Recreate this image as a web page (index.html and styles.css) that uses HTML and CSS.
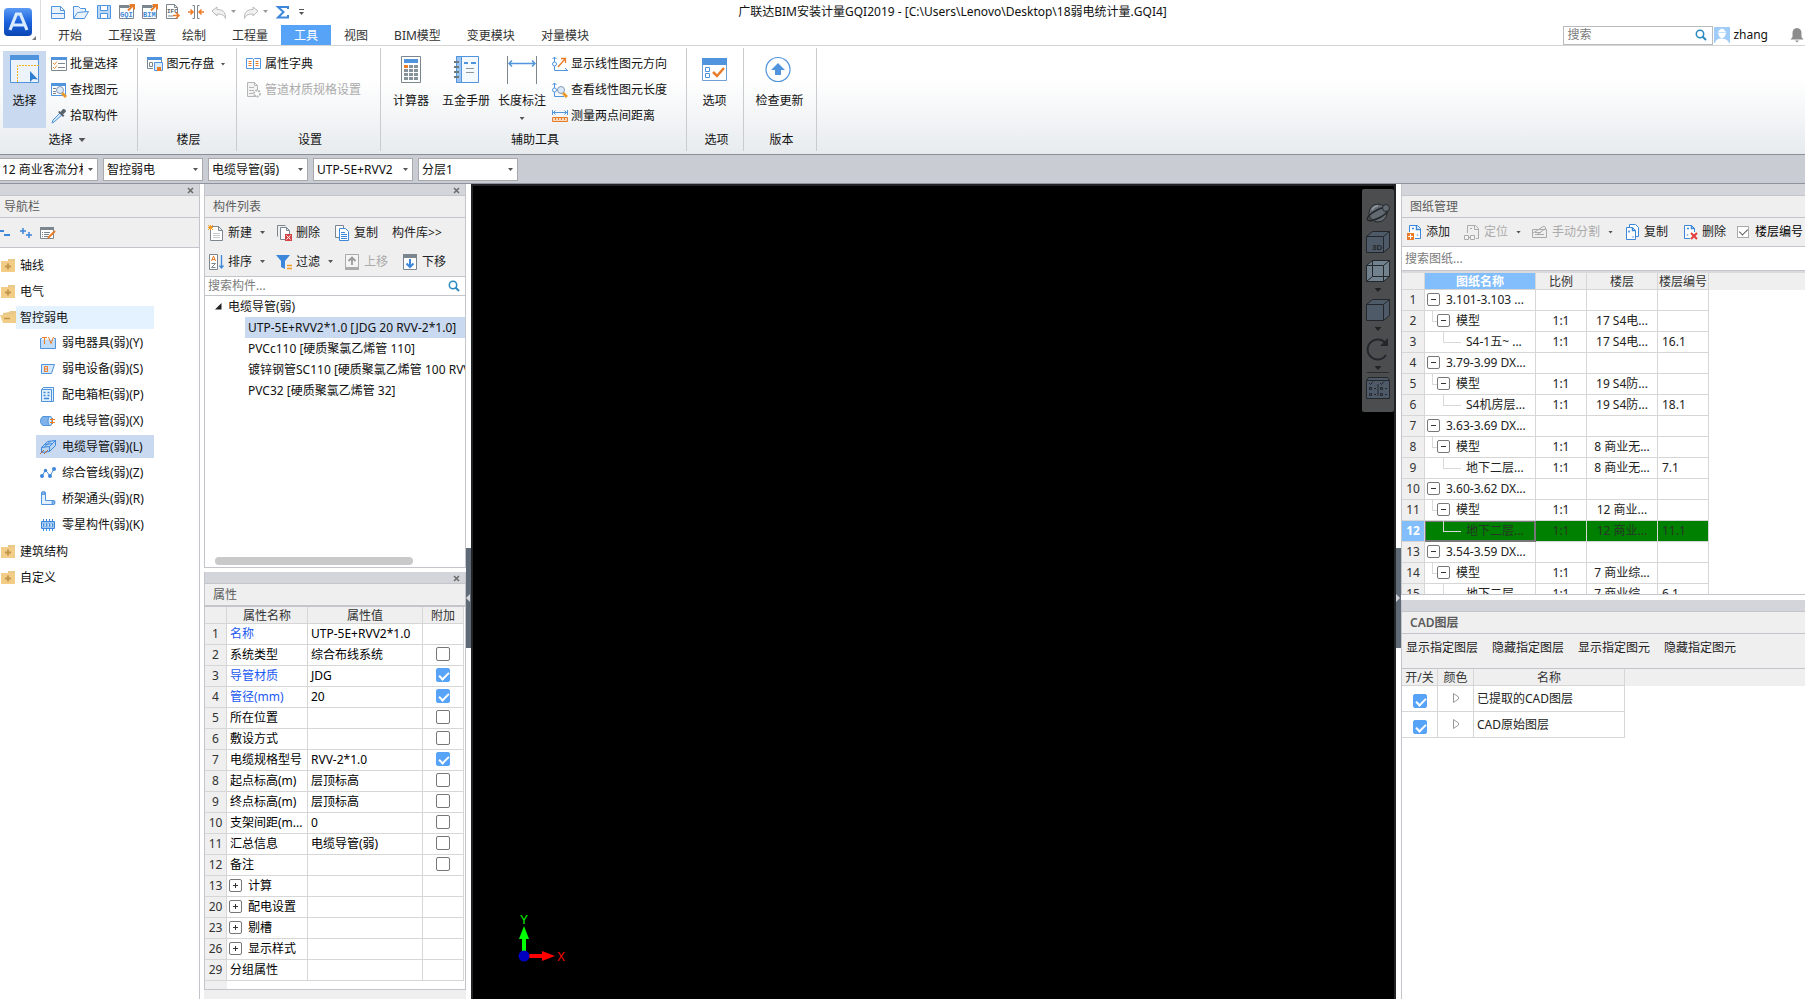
FILE: index.html
```html
<!DOCTYPE html>
<html lang="zh-CN">
<head>
<meta charset="utf-8">
<title>广联达BIM安装计量GQI2019</title>
<link rel="stylesheet" href="styles.css">
</head>
<body>
<svg class="defs" aria-hidden="true">
  <symbol id="folder" viewBox="0 0 16 16"><path d="M8 2h7v3H8z" fill="#e9c98a"/><path d="M1 4h14v11H1z" fill="#f1cd88"/><path d="M8 6.500v6M5 9.500h6" stroke="#c2964a" stroke-width="1.800"/></symbol>
  <symbol id="search" viewBox="0 0 12 12"><circle cx="5" cy="5" r="3.700" fill="none" stroke="#2a8ac0" stroke-width="1.500"/><path d="M7.500 7.500l3.500 3.500" stroke="#2a8ac0" stroke-width="2"/></symbol>
</svg>

<header class="titlebar">
  <button class="app-button" aria-label="应用菜单">
    <svg width="36" height="40" viewBox="0 0 36 40"><defs><linearGradient id="lg" x2="0" y2="1"><stop offset="0" stop-color="#5b9bf5"/><stop offset=".5" stop-color="#1b62dc"/><stop offset="1" stop-color="#0b46b4"/></linearGradient></defs><rect x="4" y="8" width="28" height="28" rx="4" fill="url(#lg)"/><path d="M10 30l6.400-16h4L27 30M13 25h11" fill="none" stroke="#d9ecff" stroke-width="3.200"/><path d="M36 36v4h-4z" fill="#777"/></svg>
  </button>
  <div class="title-main">
    <div class="title-row">
      <div class="quick">
        <button aria-label="新建"><svg width="16" height="16" viewBox="0 0 16 16" fill="none" stroke="#4f94dc"><path d="M1.500 2.500h9l4 4v8h-13zM10.500 2.500v4h4M1.500 9.500h13" fill="#eaf3fd"/></svg></button>
        <button aria-label="打开"><svg width="16" height="16" viewBox="0 0 16 16" fill="#eaf3fd" stroke="#4f94dc"><path d="M.5 14.500v-12h5l2 2h5v3M.5 14.500l4-6 11-1-4 7z"/></svg></button>
        <button aria-label="保存"><svg width="16" height="16" viewBox="0 0 16 16" fill="#b9d8f8" stroke="#4f94dc"><path d="M1.500 1.500h13v13h-13z"/><path d="M4.500 1.500h7v5h-7zM4.500 9.500h7v5h-7z" fill="#fff"/></svg></button>
        <button aria-label="导出GQI"><svg width="16" height="16" viewBox="0 0 16 16"><path d="M.5 2.500h14v12H.5z" fill="#fff" stroke="#7b868e"/><path d="M0 1h10v3H0z" fill="#7b868e"/><text x="1" y="13" font-family="Liberation Mono" font-size="7" font-weight="bold" fill="#3f88d8">GQI</text><path d="M9 6.500l5.500-5.500M10.500 1H15v4.500" fill="none" stroke="#e87c28" stroke-width="2"/></svg></button>
        <button aria-label="导出BIM"><svg width="16" height="16" viewBox="0 0 16 16"><path d="M.5 2.500h14v12H.5z" fill="#fff" stroke="#7b868e"/><path d="M0 1h10v3H0z" fill="#7b868e"/><text x="1" y="13" font-family="Liberation Mono" font-size="7" font-weight="bold" fill="#3f88d8">BIM</text><path d="M9 6.500l5.500-5.500M10.500 1H15v4.500" fill="none" stroke="#e87c28" stroke-width="2"/></svg></button>
        <button aria-label="导出IFC"><svg width="16" height="16" viewBox="0 0 16 16"><path d="M1.500.5h8l3 3v11h-11zM9.500.5v3h3" fill="#fff" stroke="#7b868e"/><text x="2" y="9" font-family="Liberation Mono" font-size="6" font-weight="bold" fill="#59636b">IFC</text><path d="M3 12h5" stroke="#7b868e"/><path d="M8 11.500h6M11 8.500l3 3-3 3" fill="none" stroke="#e87c28" stroke-width="1.500"/></svg></button>
        <button aria-label="合并"><svg width="16" height="16" viewBox="0 0 16 16"><path d="M4.500 1.500h2v13h-2M11.500 1.500h-2v13h2" fill="none" stroke="#7b868e"/><path d="M0 8h5M16 8h-5M2.500 5.500L5 8l-2.500 2.500M13.500 5.500L11 8l2.500 2.500" fill="none" stroke="#f07a28" stroke-width="1.500"/></svg></button>
        <button class="with-caret off" aria-label="撤销"><svg width="16" height="16" viewBox="0 0 16 16"><path d="M1 7l5-4v2.500c5 0 9 2 8.500 9-1-3-3.500-4.500-8.500-4.500v2z" fill="#f1f1f1" stroke="#b9b9b9"/></svg><i class="caret"></i></button>
        <button class="with-caret off" aria-label="重做"><svg width="16" height="16" viewBox="0 0 16 16"><path d="M15 7l-5-4v2.500c-5 0-9 2-8.500 9 1-3 3.500-4.500 8.500-4.500v2z" fill="#f1f1f1" stroke="#b9b9b9"/></svg><i class="caret"></i></button>
        <button aria-label="汇总"><svg width="16" height="16" viewBox="0 0 16 16"><path d="M13 5V3H3l5.500 5L3 13.500h10V11" fill="none" stroke="#3d87da" stroke-width="2"/></svg></button>
        <button aria-label="自定义快速访问栏"><svg width="7" height="8" viewBox="0 0 7 8"><path d="M1 1.500h5" stroke="#555"/><path d="M1 4h5L3.500 7z" fill="#555"/></svg></button>
      </div>
      <h1 class="title">广联达BIM安装计量GQI2019 - [C:\Users\Lenovo\Desktop\18弱电统计量.GQI4]</h1>
    </div>
    <div class="tab-row">
      <nav class="tabs">
        <button>开始</button><button>工程设置</button><button>绘制</button><button>工程量</button><button class="active">工具</button><button>视图</button><button>BIM模型</button><button>变更模块</button><button>对量模块</button>
      </nav>
      <div class="account">
        <div class="top-search"><input type="text" placeholder="搜索" aria-label="搜索"><svg width="12" height="12"><use href="#search"/></svg></div>
        <button class="user"><svg width="16" height="16" viewBox="0 0 16 16"><path d="M0 0h16v16H0z" fill="#9fccf9"/><path d="M4 5q4-7 8 0v1q-1 5-4 5T4 6zM1 16q1-5 7-4.500T15 16z" fill="#fff"/><path d="M3.500 5.500h9" stroke="#c5e0fb"/></svg>zhang</button>
        <button class="bell" aria-label="通知"><svg width="14" height="16" viewBox="0 0 14 16"><path d="M7 1q4.500.5 4.500 5v4l2 2.500H.5l2-2.500V6Q2.500 1.500 7 1zM5 13.500h4L7 15.500z" fill="#8c8c8c"/></svg></button>
      </div>
    </div>
  </div>
</header>

<section class="ribbon" aria-label="工具">
  <div class="group g-select">
    <div class="tools">
      <button class="big on"><svg width="30" height="30" viewBox="0 0 30 30"><path d="M.5 1.500h28v27H.5z" fill="#edf3fb" stroke="#4f94dc"/><path d="M0 1h29v5H0z" fill="#4f94dc"/><path d="M7.500 28V11.500H29" fill="none" stroke="#f2b01e" stroke-dasharray="2 1"/><path d="M20 17v11l3-3 5 .5z" fill="#2f7ed0"/></svg><span>选择</span></button>
      <div class="stack">
        <button><svg width="16" height="16" viewBox="0 0 16 16"><path d="M.5 1.500h15v13H.5z" fill="#fff" stroke="#7b868e"/><path d="M0 1h16v3H0z" fill="#4f94dc"/><path d="M7 7.500h7M7 11.500h7" stroke="#7b868e"/><path d="M2 7l1.500 1.500L6 5.500M2 11l1.500 1.500L6 9.500" fill="none" stroke="#e8892c"/></svg>批量选择</button>
        <button><svg width="16" height="16" viewBox="0 0 16 16"><path d="M.5 1.500h14v12H.5z" fill="#fff" stroke="#4f94dc"/><path d="M0 1h15v3H0z" fill="#4f94dc"/><path d="M2 6.500h3M2 9.500h3M2 11.500h3" stroke="#7b868e"/><circle cx="9" cy="8" r="3.500" fill="#dbe9f8" stroke="#8299b8"/><path d="M11 11l4 4" stroke="#e99a2b" stroke-width="3"/></svg>查找图元</button>
        <button><svg width="16" height="16" viewBox="0 0 16 16"><path d="M9 5l2 2-8 7-2 1 1-3z" fill="#d4e7f9" stroke="#4f94dc"/><path d="M7 4l5 5 1.500-1.500L12 6.500l3-3q0-3-3-2.500L9.500 4 8.500 3z" fill="#59636b"/></svg>拾取构件</button>
      </div>
    </div>
    <div class="caption">选择<i class="caret wide"></i></div>
  </div>
  <div class="group g-floor">
    <div class="tools"><div class="stack">
      <button><svg width="16" height="16" viewBox="0 0 16 16"><path d="M.5 12.500v-11h14v5M.5 12.500H6" fill="none" stroke="#7b868e"/><path d="M0 1h15v3H0z" fill="#4f94dc"/><path d="M2.500 6.500h3v4h-3z" fill="#fff" stroke="#7b868e"/><path d="M7.500 6.500h8v8h-8z" fill="#d9eafb" stroke="#4f94dc"/><path d="M10 11h4v4h-4z" fill="#e87c28"/></svg>图元存盘<i class="caret"></i></button>
    </div></div>
    <div class="caption">楼层</div>
  </div>
  <div class="group g-setting">
    <div class="tools"><div class="stack">
      <button><svg width="16" height="16" viewBox="0 0 16 16"><path d="M.5 2.500h6l1 1 1-1h6v10h-6l-1 1-1-1h-6zM7.500 3.500v10" fill="#fff" stroke="#4f94dc"/><path d="M2.500 5.500h3M2.500 7.500h3M2.500 9.500h3M9.500 5.500h3M9.500 7.500h3M9.500 9.500h3" stroke="#e87c28"/></svg>属性字典</button>
      <button disabled><svg width="16" height="16" viewBox="0 0 16 16"><path d="M1.500.5h7l3 3v11h-10zM8.500.5v3h3M3 5.500h5M3 8.500h5M3 11.500h4" fill="#f3f3f3" stroke="#b5b5b5"/><circle cx="11" cy="11.500" r="3" fill="#fff" stroke="#bbb" stroke-width="2" stroke-dasharray="2 1"/></svg>管道材质规格设置</button>
    </div></div>
    <div class="caption">设置</div>
  </div>
  <div class="group g-assist">
    <div class="tools">
      <button class="big"><svg width="30" height="30" viewBox="0 0 30 30"><path d="M5.500 2.500h19v26h-19z" fill="#fff" stroke="#7b868e"/><path d="M8 5h14v4H8z" fill="#4f94dc"/><path d="M8 11h4v3H8z" fill="#e87c28"/><path d="M13 11h4v3h-4zM18 11h4v3h-4zM8 15h4v3H8zM13 15h4v3h-4zM18 15h4v3h-4zM8 19h4v3H8zM13 19h4v3h-4zM18 19h4v3h-4zM8 23h4v3H8zM13 23h4v3h-4zM18 23h4v3h-4z" fill="#87939b"/></svg><span>计算器</span></button>
      <button class="big"><svg width="30" height="30" viewBox="0 0 30 30"><path d="M5.500 2.500h22v26h-22z" fill="#f4f9fe" stroke="#4f94dc"/><path d="M5.500 2.500h5v26h-5z" fill="#9cc4ee" stroke="#4f94dc"/><path d="M3 8h5M3 13h5M3 18h5M3 23h5" stroke="#6c7880" stroke-width="2"/><path d="M13 9h4M20 9h5" stroke="#4f94dc" stroke-width="2"/><path d="M15 14.500h8M15 18.500h8" stroke="#8b969d"/></svg><span>五金手册</span></button>
      <button class="big"><svg width="30" height="30" viewBox="0 0 30 30"><path d="M.5 2v28M29.500 2v28" stroke="#7b868e"/><path d="M2 9.500h26M5 6.500l-3 3 3 3M25 6.500l3 3-3 3" fill="none" stroke="#4f94dc" stroke-width="1.500"/></svg><span>长度标注</span><i class="caret"></i></button>
      <div class="stack">
        <button><svg width="16" height="16" viewBox="0 0 16 16" fill="none"><path d="M2.500 1v13.500H16M.5 3l2-2 2 2M13 12l2.500 2.500" stroke="#4f94dc"/><circle cx="2.500" cy="8" r="2" fill="#fff" stroke="#4f94dc"/><path d="M6 11l7-8M9 2.500h4.500V7" stroke="#e87c28" stroke-width="1.300"/></svg>显示线性图元方向</button>
        <button><svg width="16" height="16" viewBox="0 0 16 16" fill="none"><path d="M2.500 1v13.500H12M.5 3l2-2 2 2" stroke="#4f94dc"/><circle cx="2.500" cy="8" r="2" fill="#fff" stroke="#4f94dc"/><circle cx="9" cy="8" r="3.500" fill="#dbe9f8" stroke="#8299b8"/><path d="M11 11l4 4" stroke="#e99a2b" stroke-width="3"/></svg>查看线性图元长度</button>
        <button><svg width="16" height="16" viewBox="0 0 16 16" fill="none"><path d="M.5 2v5M15.500 2v5M1 4.500h14M3.500 2.500l-2 2 2 2M12.500 2.500l2 2-2 2" stroke="#4f94dc"/><path d="M.5 9.500h15v4H.5z" fill="#fbd9bd" stroke="#e87c28"/><path d="M3.500 10v2M6.500 10v2M9.500 10v2M12.500 10v2" stroke="#e87c28"/></svg>测量两点间距离</button>
      </div>
    </div>
    <div class="caption">辅助工具</div>
  </div>
  <div class="group g-option">
    <div class="tools"><button class="big"><svg width="30" height="30" viewBox="0 0 30 30"><path d="M2.500 4.500h24v22h-24z" fill="#fff" stroke="#6f9fd4"/><path d="M2 4h25v7H2z" fill="#4f94dc"/><path d="M5.500 13.500h4v4h-4zM5.500 19.500h4v4h-4z" fill="#fff" stroke="#4f94dc"/><path d="M13 18l4 4 7-8" fill="none" stroke="#e87c28" stroke-width="2.500"/></svg><span>选项</span></button></div>
    <div class="caption">选项</div>
  </div>
  <div class="group g-version">
    <div class="tools"><button class="big"><svg width="30" height="30" viewBox="0 0 30 30"><circle cx="14" cy="15.500" r="12" fill="#fff" stroke="#4f94dc" stroke-width="1.200"/><path d="M14 9l7 7h-4v5h-6v-5H7z" fill="#4f94dc"/></svg><span>检查更新</span></button></div>
    <div class="caption">版本</div>
  </div>
</section>

<div class="filters">
  <span class="combo"><select aria-label="楼层"><option>12 商业客流分析</option></select></span>
  <span class="combo"><select aria-label="专业"><option>智控弱电</option></select></span>
  <span class="combo"><select aria-label="构件类型"><option>电缆导管(弱)</option></select></span>
  <span class="combo"><select aria-label="构件"><option>UTP-5E+RVV2</option></select></span>
  <span class="combo"><select aria-label="分层"><option>分层1</option></select></span>
</div>

<main class="workspace">
  <aside class="nav-panel">
    <div class="strip"><button aria-label="关闭导航栏"><svg width="7" height="7" viewBox="0 0 7 7"><path d="M1 1l5 5M6 1L1 6" stroke="#6b6b6b" stroke-width="1.500"/></svg></button></div>
    <h2>导航栏</h2>
    <div class="nav-tools">
      <button aria-label="全部折叠"><svg width="11" height="14" viewBox="0 0 11 14"><path d="M0 5h4M4 9h6" stroke="#3d87da" stroke-width="2"/></svg></button>
      <button aria-label="全部展开"><svg width="12" height="14" viewBox="0 0 12 14"><path d="M0 5h6M3 2v6M6 9h6M9 6v6" stroke="#3d87da" stroke-width="1.500"/></svg></button>
      <button aria-label="编辑"><svg width="16" height="14" viewBox="0 0 16 14"><path d="M.5 1.500h13v11H.5z" fill="#fff" stroke="#7b868e"/><path d="M0 1h14v3H0z" fill="#7b868e"/><path d="M2 6.500h1M4 6.500h6M2 8.500h1M4 8.500h5M2 10.500h1M4 10.500h4" stroke="#7b868e"/><path d="M8 12l7-7" stroke="#e87c28" stroke-width="2"/></svg></button>
    </div>
    <ul class="nav-tree">
      <li><svg width="16" height="16"><use href="#folder"/></svg><span>轴线</span></li>
      <li><svg width="16" height="16"><use href="#folder"/></svg><span>电气</span></li>
      <li class="open"><svg width="16" height="16" viewBox="0 0 16 16"><path d="M3 4l6-1 1-1h6v12H3z" fill="#e9c98a"/><path d="M0 6h13l3-2-1 10H3z" fill="#f1cd88"/><path d="M4 9.500h6" stroke="#c2964a" stroke-width="1.500"/></svg><span>智控弱电</span></li>
      <li class="leaf"><svg width="16" height="16" viewBox="0 0 16 16"><path d="M.5 4.500h15v9H.5z" fill="#c3dcf7"/><path d="M2 3.500H.5v10h15v-10H14" fill="none" stroke="#4f94dc"/><path d="M2 2.500h5M4.500 2v7M8.500 2l2.500 6.500L13.500 2" fill="none" stroke="#e87c28"/></svg><span>弱电器具(弱)(Y)</span></li>
      <li class="leaf"><svg width="16" height="16" viewBox="0 0 16 16"><path d="M1.500 3.500h13l-3 9h-10z" fill="#d4e7fb" stroke="#4f94dc"/><path d="M4.500 11V5.500h3v5h-3M4.500 8h3" fill="none" stroke="#e87c28"/></svg><span>弱电设备(弱)(S)</span></li>
      <li class="leaf"><svg width="16" height="16" viewBox="0 0 16 16"><path d="M1.500 2.500l2-2h10v14h-12zM1.500 2.500h10v12" fill="#e1effc" stroke="#4f94dc"/><path d="M3.500 5.500h2M7.500 5.500h2M3.500 8.500h2M7.500 8.500h2M4 11.500h5" stroke="#3d87da" stroke-width="1.500"/></svg><span>配电箱柜(弱)(P)</span></li>
      <li class="leaf"><svg width="16" height="16" viewBox="0 0 16 16"><path d="M3 3.500h8v9H3q-2.500-1-2.500-4.500T3 3.500z" fill="#7fb2ea" stroke="#4f94dc"/><ellipse cx="10" cy="8" rx="2" ry="4.500" fill="#d4e7fb" stroke="#4f94dc"/><path d="M10 6.500h5M10 9.500h5M12.500 5v6" stroke="#e87c28"/></svg><span>电线导管(弱)(X)</span></li>
      <li class="leaf current"><svg width="16" height="16" viewBox="0 0 16 16"><path d="M1.500 8.500l6-6 8-1v5l-6 6-8 1z" fill="#b9d6f5" stroke="#3d87da"/><path d="M1.500 8.500l8-1 6-6M9.500 7.500v5M4.500 8l6-6M5 5.500l8-1" fill="none" stroke="#3d87da"/><path d="M0 15l4-4M4 15l4-4" stroke="#b9683a"/></svg><span>电缆导管(弱)(L)</span></li>
      <li class="leaf"><svg width="16" height="16" viewBox="0 0 16 16"><path d="M2 11l3.500-6L10 11l4-7" fill="none" stroke="#4f94dc"/><g fill="#3d87da"><circle cx="2" cy="11" r="2"/><circle cx="5.500" cy="5.500" r="1.700"/><circle cx="10" cy="11" r="2"/><circle cx="14" cy="4" r="2"/></g></svg><span>综合管线(弱)(Z)</span></li>
      <li class="leaf"><svg width="16" height="16" viewBox="0 0 16 16"><path d="M1.500 2v11.500H14v-4H5.500V2z" fill="#e1effc" stroke="#4f94dc"/><ellipse cx="3.500" cy="2" rx="2" ry="1.500" fill="#7fb2ea" stroke="#4f94dc"/><ellipse cx="13.500" cy="11.500" rx="1.500" ry="2" fill="#7fb2ea" stroke="#4f94dc"/></svg><span>桥架通头(弱)(R)</span></li>
      <li class="leaf"><svg width="16" height="16" viewBox="0 0 16 16"><path d="M1.500 4.500h13v7h-13z" fill="#9cc4ee" stroke="#3d87da"/><path d="M3.500 2v12M6.500 2v12M9.500 2v12M12.500 2v12" stroke="#3d87da" stroke-dasharray="3 1.500"/><path d="M2 8h12" stroke="#fff" stroke-dasharray="1 2"/></svg><span>零星构件(弱)(K)</span></li>
      <li><svg width="16" height="16"><use href="#folder"/></svg><span>建筑结构</span></li>
      <li><svg width="16" height="16"><use href="#folder"/></svg><span>自定义</span></li>
    </ul>
  </aside>

  <div class="mid-column">
    <section class="panel components">
      <div class="strip"><button aria-label="关闭构件列表"><svg width="7" height="7" viewBox="0 0 7 7"><path d="M1 1l5 5M6 1L1 6" stroke="#6b6b6b" stroke-width="1.500"/></svg></button></div>
      <h2>构件列表</h2>
      <div class="toolbars">
        <div class="toolbar">
          <button class="drop"><svg width="16" height="16" viewBox="0 0 16 16"><path d="M2.500 1.500h8l4 4v10h-12zM10.500 1.500v4h4" fill="#fff" stroke="#7b868e"/><path d="M5 8.500h7M5 10.500h7M5 12.500h7" stroke="#c5cacd"/><path d="M0 0l5 5M5 0L0 5M2.500 0v5M0 2.500h5" stroke="#f29a22"/></svg>新建<i class="caret"></i></button>
          <button><svg width="16" height="16" viewBox="0 0 16 16"><path d="M1.500 11.500v-11h8" fill="none" stroke="#7b868e"/><path d="M4.500 2.500h6l3 3v9h-9zM10.500 2.500v3h3" fill="#fff" stroke="#7b868e"/><path d="M9 9h7v7H9z" fill="#d64545"/><path d="M10.500 10.500l4 4M14.500 10.500l-4 4" stroke="#fff"/></svg>删除</button>
          <button><svg width="16" height="16" viewBox="0 0 16 16"><path d="M5 12.500H1.500V.5h8V3" fill="#fff" stroke="#7b868e"/><path d="M5.500 3.500h6l3 3v9h-9z" fill="#fff" stroke="#3d87da"/><path d="M7 7.500h4M7 9.500h6M7 11.500h6M7 13.500h6" stroke="#3d87da"/></svg>复制</button>
          <button>构件库&gt;&gt;</button>
        </div>
        <div class="toolbar">
          <button class="drop"><svg width="16" height="16" viewBox="0 0 16 16"><path d="M1.500.5h8v15h-8z" fill="#fff" stroke="#7b868e"/><path d="M3.500 7l2-5 2 5M4 5.500h3" fill="none" stroke="#e87c28"/><path d="M3.500 9.500h4l-4 4h4" fill="none" stroke="#7b868e"/><path d="M13.500 1v13M11.500 11.500l2 2.500 2-2.500" fill="none" stroke="#3d87da" stroke-width="1.300"/></svg>排序<i class="caret"></i></button>
          <button class="drop"><svg width="16" height="16" viewBox="0 0 16 16"><path d="M0 1h14L9 7v8l-4-2V7z" fill="#3d87da"/><path d="M11 11.500h5M11 14.500h5" stroke="#f29a22" stroke-width="1.500"/></svg>过滤<i class="caret"></i></button>
          <button disabled><svg width="16" height="16" viewBox="0 0 16 16"><path d="M1.500.5h13v14h-13z" fill="#f4f4f4" stroke="#aaa"/><path d="M1 13h14v3H1z" fill="#aaa"/><path d="M8 11V4M4.500 7L8 3.500 11.500 7" fill="none" stroke="#999" stroke-width="1.800"/></svg>上移</button>
          <button><svg width="16" height="16" viewBox="0 0 16 16"><path d="M1.500.5h13v15h-13z" fill="#fff" stroke="#7b868e"/><path d="M1 0h14v4H1z" fill="#7b868e"/><path d="M8 5v8M4.500 9.500L8 13l3.500-3.500" fill="none" stroke="#3d87da" stroke-width="2"/></svg>下移</button>
        </div>
      </div>
      <div class="search"><input type="text" placeholder="搜索构件..." aria-label="搜索构件"><svg width="12" height="12"><use href="#search"/></svg></div>
      <ul class="comp-tree">
        <li class="root"><svg width="7" height="7" viewBox="0 0 7 7"><path d="M6.500 0v6.500H0z" fill="#222"/></svg>电缆导管(弱)</li>
        <li class="current">UTP-5E+RVV2*1.0 [JDG 20 RVV-2*1.0]</li>
        <li>PVCc110 [硬质聚氯乙烯管 110]</li>
        <li>镀锌钢管SC110 [硬质聚氯乙烯管 100 RVV</li>
        <li>PVC32 [硬质聚氯乙烯管 32]</li>
      </ul>
      <div class="hscroll"><i></i></div>
    </section>

    <section class="panel properties">
      <div class="strip"><button aria-label="关闭属性"><svg width="7" height="7" viewBox="0 0 7 7"><path d="M1 1l5 5M6 1L1 6" stroke="#6b6b6b" stroke-width="1.500"/></svg></button></div>
      <h2>属性</h2>
      <div class="prop-body">
        <table class="grid props">
          <colgroup><col class="w22"><col class="w81"><col class="w115"><col class="w41"></colgroup>
          <thead><tr><th></th><th>属性名称</th><th>属性值</th><th>附加</th></tr></thead>
          <tbody>
            <tr><th>1</th><td class="blue">名称</td><td>UTP-5E+RVV2*1.0</td><td></td></tr>
            <tr><th>2</th><td>系统类型</td><td>综合布线系统</td><td><input type="checkbox" aria-label="附加系统类型"></td></tr>
            <tr><th>3</th><td class="blue">导管材质</td><td>JDG</td><td><input type="checkbox" checked aria-label="附加导管材质"></td></tr>
            <tr><th>4</th><td class="blue">管径(mm)</td><td>20</td><td><input type="checkbox" checked aria-label="附加管径"></td></tr>
            <tr><th>5</th><td>所在位置</td><td></td><td><input type="checkbox" aria-label="附加所在位置"></td></tr>
            <tr><th>6</th><td>敷设方式</td><td></td><td><input type="checkbox" aria-label="附加敷设方式"></td></tr>
            <tr><th>7</th><td>电缆规格型号</td><td>RVV-2*1.0</td><td><input type="checkbox" checked aria-label="附加电缆规格型号"></td></tr>
            <tr><th>8</th><td>起点标高(m)</td><td>层顶标高</td><td><input type="checkbox" aria-label="附加起点标高"></td></tr>
            <tr><th>9</th><td>终点标高(m)</td><td>层顶标高</td><td><input type="checkbox" aria-label="附加终点标高"></td></tr>
            <tr><th>10</th><td>支架间距(m...</td><td>0</td><td><input type="checkbox" aria-label="附加支架间距"></td></tr>
            <tr><th>11</th><td>汇总信息</td><td>电缆导管(弱)</td><td><input type="checkbox" aria-label="附加汇总信息"></td></tr>
            <tr><th>12</th><td>备注</td><td></td><td><input type="checkbox" aria-label="附加备注"></td></tr>
            <tr><th>13</th><td><div class="node"><button class="box plus" aria-label="展开计算"></button>计算</div></td><td></td><td></td></tr>
            <tr><th>20</th><td><div class="node"><button class="box plus" aria-label="展开配电设置"></button>配电设置</div></td><td></td><td></td></tr>
            <tr><th>23</th><td><div class="node"><button class="box plus" aria-label="展开剔槽"></button>剔槽</div></td><td></td><td></td></tr>
            <tr><th>26</th><td><div class="node"><button class="box plus" aria-label="展开显示样式"></button>显示样式</div></td><td></td><td></td></tr>
            <tr><th>29</th><td>分组属性</td><td></td><td></td></tr>
          </tbody>
        </table>
      </div>
    </section>
  </div>

  <div class="splitter"><button class="left" aria-label="折叠左侧"></button></div>

  <section class="canvas" aria-label="绘图区">
    <div class="view-tools">
      <button aria-label="动态观察"><svg width="24" height="24" viewBox="0 0 24 24"><circle cx="12" cy="12" r="9" fill="#626970" stroke="#25292d"/><path d="M6 9q2-4 6-4" fill="none" stroke="#8b9298" stroke-width="2"/><ellipse cx="12" cy="13" rx="12" ry="4" transform="rotate(-28 12 13)" fill="none" stroke="#23272b" stroke-width="1.500"/><circle cx="20" cy="7" r="3.500" fill="#626970" stroke="#25292d"/></svg></button>
      <button aria-label="三维"><svg width="24" height="24" viewBox="0 0 24 24"><path d="M.5 6.500l6-5h17v16l-6 5H.5z" fill="#4e5a67" stroke="#23272b"/><path d="M.5 6.500h17v16M17.500 6.500l6-5" fill="none" stroke="#23272b"/><text x="6" y="20" font-family="Liberation Sans" font-size="8" font-weight="bold" fill="#23272b">3D</text></svg></button>
      <button class="with-menu" aria-label="线框"><svg width="24" height="24" viewBox="0 0 24 24"><path d="M.5 6.500l6-5h17v16l-6 5H.5z" fill="#71818e" stroke="#23272b"/><path d="M.5 6.500h17v16M17.500 6.500l6-5M6.500 1.500v16h17M6.500 17.500l-6 5" fill="none" stroke="#23272b"/></svg><i class="caret"></i></button>
      <button class="with-menu" aria-label="视图方向"><svg width="24" height="24" viewBox="0 0 24 24"><path d="M.5 6.500l6-5h17v16l-6 5H.5z" fill="#4e5a67" stroke="#23272b"/><path d="M.5 6.500h17v16M17.500 6.500l6-5" fill="none" stroke="#23272b"/></svg><i class="caret"></i></button>
      <button class="with-menu" aria-label="旋转"><svg width="24" height="24" viewBox="0 0 24 24"><path d="M20 18a10 10 0 1 1 0-11" fill="none" stroke="#23272b" stroke-width="2"/><path d="M22 1v8h-8z" fill="#23272b"/></svg><i class="caret"></i></button>
      <hr>
      <button aria-label="显示设置"><svg width="24" height="24" viewBox="0 0 24 24"><path d="M.5 4.500l2-3h19l2 3v18H.5zM.5 4.500h23M12 8v12" fill="#4e5a67" stroke="#23272b"/><path d="M3 7l1.500 1.500L7 5.500M14 7l1.500 1.500L18 5.500M3.500 11.500h2v2h-2zM3.500 17.500h2v2h-2zM14.500 11.500h2v2h-2zM14.500 17.500h2v2h-2zM8 12.500h2M8 18.500h2M19 12.500h2M19 18.500h2" fill="none" stroke="#23272b"/></svg></button>
    </div>
    <svg class="axis" width="56" height="60" viewBox="0 0 56 60">
      <path d="M13 46V26" stroke="#0f0" stroke-width="4"/><path d="M13 16l5 13H8z" fill="#0f0"/>
      <path d="M16 46h18" stroke="#f00" stroke-width="4"/><path d="M44 46l-13-5v10z" fill="#f00"/>
      <circle cx="13" cy="46" r="5.500" fill="#0000c0"/>
      <text x="9" y="14" font-size="12" fill="#0f0">Y</text><text x="46" y="51" font-size="12" fill="#f00">X</text>
    </svg>
  </section>

  <div class="splitter"><button class="right" aria-label="折叠右侧"></button></div>

  <div class="right-column">
    <section class="drawings">
      <div class="strip"></div>
      <h2>图纸管理</h2>
      <div class="toolbar">
        <button><svg width="16" height="16" viewBox="0 0 16 16"><path d="M3.500 8V1.500h8l3 3v10H9" fill="#fff" stroke="#3d87da"/><path d="M10.500 1.500v4h4M6 4.500h2M11.500 10.500v1" fill="none" stroke="#3d87da" stroke-width="1.500"/><path d="M1 9h7v7H1z" fill="#e87c28"/><path d="M4.500 10v5M2 12.500h5" stroke="#fff"/></svg>添加</button>
        <button class="drop" disabled><svg width="16" height="16" viewBox="0 0 16 16"><path d="M3.500 9V1.500h8l3 3v10H12M10.500 1.500v4h4M6 4.500h2" fill="none" stroke="#aaa"/><path d="M.5 11.500h4v4h-4zM6.500 11.500h4v4h-4zM4.500 13.500h2" fill="#f4f4f4" stroke="#aaa"/></svg>定位<i class="caret"></i></button>
        <button class="drop" disabled><svg width="16" height="16" viewBox="0 0 16 16"><path d="M.5 5.500h14v8H.5zM3 8.500h6M3 10.500h9M1 9l11-7 2 2-8 6" fill="none" stroke="#aaa"/></svg>手动分割<i class="caret"></i></button>
        <button><svg width="16" height="16" viewBox="0 0 16 16"><path d="M5.500 3V.5h6l3 3v9H12" fill="#fff" stroke="#3d87da"/><path d="M2.500 3.500h6l3 3v9h-9z" fill="#fff" stroke="#3d87da"/><path d="M8.500 3.500v3h3M5 6.500v2M9 12.500v1" fill="none" stroke="#3d87da" stroke-width="1.500"/></svg>复制</button>
        <button><svg width="16" height="16" viewBox="0 0 16 16"><path d="M8 14.500H2.500v-13h7l3 3V8" fill="#fff" stroke="#3d87da"/><path d="M9.500 1.500v3h3M5 4.500h2M5.500 10.500v1" fill="none" stroke="#3d87da" stroke-width="1.500"/><path d="M9 9l6 6M15 9l-6 6" stroke="#e23b3b" stroke-width="2"/></svg>删除</button>
        <label class="floor-check"><input type="checkbox" checked>楼层编号</label>
      </div>
      <div class="search"><input type="text" placeholder="搜索图纸..." aria-label="搜索图纸"></div>
      <div class="table-area">
        <table class="grid draw">
          <colgroup><col class="w23"><col class="w111"><col class="w51"><col class="w71"><col class="w51"></colgroup>
          <thead><tr><th></th><th class="picked">图纸名称</th><th>比例</th><th>楼层</th><th>楼层编号</th></tr></thead>
          <tbody>
            <tr><th>1</th><td><div class="node"><button class="box" aria-label="折叠"></button>3.101-3.103 ...</div></td><td></td><td></td><td></td></tr>
            <tr><th>2</th><td><div class="node l1"><button class="box" aria-label="折叠"></button>模型</div></td><td>1:1</td><td>17 S4电...</td><td></td></tr>
            <tr><th>3</th><td><div class="node l2">S4-1五~ ...</div></td><td>1:1</td><td>17 S4电...</td><td>16.1</td></tr>
            <tr><th>4</th><td><div class="node"><button class="box" aria-label="折叠"></button>3.79-3.99 DX...</div></td><td></td><td></td><td></td></tr>
            <tr><th>5</th><td><div class="node l1"><button class="box" aria-label="折叠"></button>模型</div></td><td>1:1</td><td>19 S4防...</td><td></td></tr>
            <tr><th>6</th><td><div class="node l2">S4机房层...</div></td><td>1:1</td><td>19 S4防...</td><td>18.1</td></tr>
            <tr><th>7</th><td><div class="node"><button class="box" aria-label="折叠"></button>3.63-3.69 DX...</div></td><td></td><td></td><td></td></tr>
            <tr><th>8</th><td><div class="node l1"><button class="box" aria-label="折叠"></button>模型</div></td><td>1:1</td><td>8 商业无...</td><td></td></tr>
            <tr><th>9</th><td><div class="node l2">地下二层...</div></td><td>1:1</td><td>8 商业无...</td><td>7.1</td></tr>
            <tr><th>10</th><td><div class="node"><button class="box" aria-label="折叠"></button>3.60-3.62 DX...</div></td><td></td><td></td><td></td></tr>
            <tr><th>11</th><td><div class="node l1"><button class="box" aria-label="折叠"></button>模型</div></td><td>1:1</td><td>12 商业...</td><td></td></tr>
            <tr class="selected"><th>12</th><td><div class="node l2">地下二层...</div></td><td>1:1</td><td>12 商业...</td><td>11.1</td></tr>
            <tr><th>13</th><td><div class="node"><button class="box" aria-label="折叠"></button>3.54-3.59 DX...</div></td><td></td><td></td><td></td></tr>
            <tr><th>14</th><td><div class="node l1"><button class="box" aria-label="折叠"></button>模型</div></td><td>1:1</td><td>7 商业综...</td><td></td></tr>
            <tr><th>15</th><td><div class="node l2">地下二层...</div></td><td>1:1</td><td>7 商业综...</td><td>6.1</td></tr>
          </tbody>
        </table>
      </div>
    </section>
    <section class="layers">
      <div class="strip"></div>
      <h2>CAD图层</h2>
      <div class="layer-tools"><button>显示指定图层</button><button>隐藏指定图层</button><button>显示指定图元</button><button>隐藏指定图元</button></div>
      <div class="table-area">
        <table class="grid cad">
          <colgroup><col class="w36"><col class="w36"><col class="w151"></colgroup>
          <thead><tr><th>开/关</th><th>颜色</th><th>名称</th></tr></thead>
          <tbody>
            <tr><td><input type="checkbox" checked aria-label="已提取的CAD图层"></td><td><svg width="8" height="10" viewBox="0 0 8 10"><path d="M1.500.5L6.500 4v2L1.500 9.500z" fill="#fff" stroke="#999"/></svg></td><td>已提取的CAD图层</td></tr>
            <tr><td><input type="checkbox" checked aria-label="CAD原始图层"></td><td><svg width="8" height="10" viewBox="0 0 8 10"><path d="M1.500.5L6.500 4v2L1.500 9.500z" fill="#fff" stroke="#999"/></svg></td><td>CAD原始图层</td></tr>
          </tbody>
        </table>
      </div>
    </section>
  </div>
</main>
</body>
</html>
```
FILE: styles.css
```css
* { box-sizing: border-box; }

body {
  margin: 0;
  height: 100vh;
  display: flex;
  flex-direction: column;
  overflow: hidden;
  background: #fff;
  color: #111;
  font: 12px/16px "Noto Sans", "Noto Sans CJK SC", sans-serif;
}

.defs { display: none; }
svg { display: block; flex: none; }

button, input, select { font: inherit; color: inherit; }

button {
  display: flex;
  align-items: center;
  margin: 0;
  padding: 0;
  border: 0;
  background: none;
  white-space: nowrap;
  flex: none;
}

button:disabled { color: #ababab; }
h1, h2 { margin: 0; font-size: 12px; font-weight: 400; }
ul { list-style: none; margin: 0; padding: 0; }

input[type="text"] {
  flex: 1;
  min-width: 0;
  padding: 0;
  border: 0;
  outline: 0;
  background: none;
}
input::placeholder { color: #7b7b7b; opacity: 1; }

.caret {
  flex: none;
  width: 5px;
  height: 3px;
  background: #555;
  clip-path: polygon(0 0, 100% 0, 50% 100%);
}
.caret.wide { width: 7px; height: 4px; }

/* Title bar */
.titlebar { display: flex; border-bottom: 1px solid #d5d5d5; }
.app-button { width: 41px; height: 40px; border-right: 1px solid #ddd; }
.title-main { flex: 1; min-width: 0; }
.title-row { display: flex; align-items: center; height: 25px; padding: 0 205px 2px 9px; }
.quick { display: flex; align-items: center; gap: 7px; }
.quick .with-caret { gap: 4px; }
.quick .off .caret { background: #999; }
.title { flex: 1; text-align: center; white-space: nowrap; }
.tab-row { display: flex; justify-content: space-between; height: 20px; }
.tabs { display: flex; padding-left: 4px; }
.tabs button { padding: 2px 13px 0; color: #333; }
.tabs .active { background: #57a3f8; color: #fff; }
.account { display: flex; align-items: center; gap: 1px; padding-right: 1px; }
.top-search {
  display: flex;
  align-items: center;
  width: 150px;
  height: 19px;
  padding: 0 5px 0 3px;
  border: 1px solid #b9bcbf;
}
.user { gap: 3px; }
.bell { margin-left: 21px; }

/* Ribbon */
.ribbon {
  display: flex;
  height: 109px;
  padding: 2px 0 3px;
  background: linear-gradient(#fff 30%, #e7ebee);
  border-bottom: 1px solid #8b9098;
}
.group {
  display: flex;
  flex-direction: column;
  justify-content: space-between;
  border-right: 1px solid #c9cbcd;
  padding: 3px 10px 3px 9px;
}
.tools { display: flex; justify-content: center; }
.stack { display: flex; flex-direction: column; }
.stack button { height: 26px; gap: 3px; }
.stack .caret { margin-left: 3px; }
.big { flex-direction: column; height: 77px; padding-top: 3px; }
.big span { margin-top: 9px; }
.big .caret { margin-top: 8px; }
.big.on { width: 43px; background: #c9d9ef; }
.caption {
  display: flex;
  justify-content: center;
  align-items: center;
  gap: 6px;
  padding-left: 4px;
}
.g-select { width: 138px; padding-left: 3px; }
.g-select .tools { justify-content: flex-start; gap: 5px; }
.g-floor { width: 99px; }
.g-setting { width: 144px; }
.g-setting .tools { justify-content: flex-start; }
.g-assist { width: 306px; }
.g-assist .tools { justify-content: flex-start; gap: 8px; padding-left: 3px; }
.g-assist .big:first-child { margin-right: 5px; }
.g-assist .stack { margin-left: -2px; }
.g-option { width: 57px; }
.g-version { width: 73px; }

/* Filter combos */
.filters {
  display: flex;
  gap: 5px;
  height: 29px;
  padding: 3px 0 2px;
  background: #c9ccd2;
  border-bottom: 1px solid #8e939d;
}
.combo { position: relative; width: 100px; flex: none; }
.combo:first-child { margin-left: -2px; }
.combo select {
  appearance: none;
  display: block;
  width: 100%;
  height: 23px;
  padding: 0 14px 0 3px;
  border: 1px solid #a7a9ad;
  border-radius: 0;
  background: #fff;
  text-overflow: clip;
}
.combo::after {
  content: "";
  position: absolute;
  right: 5px;
  top: 10px;
  width: 5px;
  height: 3px;
  background: #555;
  clip-path: polygon(0 0, 100% 0, 50% 100%);
}

/* Workspace */
.workspace { flex: 1; min-height: 0; display: flex; }

.strip {
  display: flex;
  justify-content: flex-end;
  align-items: center;
  height: 12px;
  padding: 1px 5px 0 0;
  background: #d3d5db;
  border-bottom: 1px solid #c3c5cb;
}
h2 {
  height: 22px;
  padding: 3px 8px 0;
  background: #efefef;
  color: #5c5c5c;
  border-bottom: 1px solid #c3c5cb;
}

.nav-panel { width: 200px; flex: none; border-right: 1px solid #c3c5cb; }
.nav-panel h2 { padding-left: 4px; }
.nav-tools {
  display: flex;
  align-items: center;
  gap: 8px;
  height: 30px;
  background: #efefef;
  border-bottom: 1px solid #c3c5cb;
}
.nav-tools button:first-child { margin-right: 1px; }
.nav-tree { display: flex; flex-direction: column; padding-top: 4px; }
.nav-tree li { display: flex; align-items: center; height: 26px; }
.nav-tree li span { line-height: 23px; padding-left: 4px; }
.nav-tree .open span { width: 138px; background: #e4f1fe; }
.nav-tree .leaf { width: 118px; height: 23px; margin: 1px 0 2px 36px; padding-left: 4px; }
.nav-tree .leaf span { padding-left: 6px; white-space: nowrap; }
.nav-tree .current { background: #c9d9ef; }

.mid-column {
  display: flex;
  flex-direction: column;
  width: 262px;
  flex: none;
  margin-left: 4px;
}
.panel { border: 1px solid #c3c5cb; border-top: 0; }
.components { flex: 1; min-height: 0; display: flex; flex-direction: column; margin-bottom: 4px; }
.toolbars { background: #efefef; border-bottom: 1px solid #c3c5cb; }
.toolbar {
  display: flex;
  align-items: center;
  gap: 11px;
  height: 29px;
  padding: 0 3px;
  background: #efefef;
  color: #222;
}
.toolbar button { gap: 4px; padding-right: 3px; }
.toolbar .drop { padding-right: 0; }
.toolbar .caret { margin-left: 4px; }
.search {
  display: flex;
  align-items: center;
  height: 19px;
  padding: 0 5px 0 3px;
  background: #fff;
  border-bottom: 1px solid #c3c5cb;
}
.comp-tree { flex: 1; overflow: hidden; }
.comp-tree li {
  height: 21px;
  margin-left: 40px;
  padding-left: 3px;
  line-height: 21px;
  white-space: nowrap;
}
.comp-tree .root { display: flex; align-items: center; gap: 6px; margin-left: 7px; }
.comp-tree .current { background: #c9d9ef; }
.hscroll { padding: 0 52px 2px 10px; }
.hscroll i { display: block; height: 8px; border-radius: 4px; background: #c9c9c9; }

.properties { margin-bottom: 9px; box-shadow: 0 9px #efefef; }
.properties h2 { height: 23px; border-bottom-width: 2px; }
.prop-body { padding-bottom: 8px; background: linear-gradient(to right, #efefef 22px, #fff 22px); }

/* Data grids */
.grid { table-layout: fixed; width: 0; border-collapse: separate; border-spacing: 0; color: #222; }
.grid th, .grid td {
  height: 21px;
  padding: 0;
  border: solid #d6d6d6;
  border-width: 0 1px 1px 0;
  line-height: 20px;
  font-weight: 400;
  white-space: nowrap;
  overflow: hidden;
}
.grid th { background: #efefef; color: #333; text-align: center; }
.grid thead th { height: 17px; padding-top: 1px; line-height: 15px; }
.w22 { width: 22px; } .w23 { width: 23px; } .w36 { width: 36px; } .w41 { width: 41px; }
.w51 { width: 51px; } .w71 { width: 71px; } .w81 { width: 81px; } .w111 { width: 111px; }
.w115 { width: 115px; } .w151 { width: 151px; }

.props td { padding-left: 3px; color: #000; }
.props td:last-child { padding: 2px 0 0; vertical-align: top; }
.props .blue { color: #1b59f0; }

.grid input[type="checkbox"] {
  appearance: none;
  display: block;
  width: 14px;
  height: 14px;
  margin: 0 auto;
  border: 1px solid #777;
  border-radius: 2px;
  background: #fff;
}
.grid input[type="checkbox"]:checked { background: #57a3f8; border-color: #57a3f8; }
.grid input[type="checkbox"]:checked::after {
  content: "";
  display: block;
  width: 4px;
  height: 8px;
  margin: 1px 0 0 4px;
  border: solid #fff;
  border-width: 0 2px 2px 0;
  transform: rotate(45deg);
}

.node { display: flex; align-items: center; height: 20px; }
.box {
  justify-content: center;
  width: 13px;
  height: 13px;
  margin: 0 6px 1px 0;
  border: 1px solid #777;
  border-radius: 2px;
  background: linear-gradient(#333, #333) center / 5px 1px no-repeat #fff;
}
.props .box {
  background: linear-gradient(#333, #333) center / 5px 1px no-repeat,
    linear-gradient(#333, #333) center / 1px 5px no-repeat #fff;
}
.props .node { margin-left: -1px; }
.draw .node { padding-left: 2px; }
.draw .node.l1 { padding-left: 7px; }
.node.l1::before, .node.l2::before {
  content: "";
  width: 4px;
  height: 10px;
  align-self: flex-start;
  border: solid #d9d9d9;
  border-width: 0 0 1px 1px;
}
.draw .node.l2 { padding-left: 18px; }
.node.l2::before { width: 17px; margin-right: 5px; }

.draw td:nth-child(3), .draw td:nth-child(4) { text-align: center; }
.draw td:last-child { padding-left: 4px; }
.draw .picked, .draw .selected th { background: #82bdfc; color: #fff; font-weight: 700; }
.draw .selected td { background: #008000; color: #263526; }
.draw .selected td:nth-child(2) { box-shadow: inset 0 0 0 1px #777; border-color: #777; }

/* Splitters */
.splitter {
  display: flex;
  align-items: center;
  width: 5px;
  flex: none;
  padding-top: 13px;
  background: #fff;
}
.splitter button { width: 5px; height: 100px; background: #5f6a77; }
.splitter button::before {
  content: "";
  width: 4px;
  height: 8px;
  background: #d3d5db;
  clip-path: polygon(100% 0, 100% 100%, 0 50%);
}
.splitter .right::before { clip-path: polygon(0 0, 100% 50%, 0 100%); }

/* Drawing canvas */
.canvas {
  position: relative;
  flex: 1;
  min-width: 0;
  background: #000;
  border: solid #222427;
  border-width: 2px 2px 0;
}
.view-tools {
  position: absolute;
  top: 3px;
  right: 0;
  display: flex;
  flex-direction: column;
  align-items: center;
  gap: 5px;
  width: 32px;
  padding: 12px 0;
  border-radius: 2px;
  background: #4c4d4e;
}
.view-tools button { flex-direction: column; }
.view-tools .with-menu { gap: 5px; }
.view-tools .with-menu .caret { margin-bottom: 1px; }
.view-tools .caret { background: #222; width: 7px; height: 4px; }
.view-tools hr { width: 22px; margin: -4px 0 -2px; border: 0; border-top: 1px solid #2a2c2e; }
.axis { position: absolute; left: 38px; bottom: 29px; font-family: "Liberation Sans", sans-serif; }

/* Right column */
.right-column {
  display: flex;
  flex-direction: column;
  gap: 5px;
  width: 404px;
  flex: none;
}
.right-column section {
  display: flex;
  flex-direction: column;
  min-height: 0;
  border-left: 1px solid #c3c5cb;
}
.right-column .strip, .right-column h2, .right-column .toolbar, .right-column .search { flex: none; }
.drawings { flex: 41 1 0; border-bottom: 1px solid #c3c5cb; }
.layers { flex: 40 1 0; }
.layers h2 { font-weight: 600; }
.drawings .toolbar { border-bottom: 1px solid #c3c5cb; padding-left: 4px; padding-right: 0; }
.drawings .toolbar button:last-of-type { padding-right: 0; }
.floor-check { display: flex; align-items: center; gap: 6px; white-space: nowrap; color: #000; }
.floor-check input {
  appearance: none;
  width: 12px;
  height: 12px;
  margin: 0;
  border: 1px solid #aaa;
  background: #fff;
}
.floor-check input:checked::after {
  content: "";
  display: block;
  width: 4px;
  height: 7px;
  margin: 0 0 0 3px;
  border: solid #555;
  border-width: 0 1px 1px 0;
  transform: rotate(45deg);
}
.drawings .search { height: 24px; }
.drawings .table-area { border-top: 2px solid #d9dade; }
.table-area {
  flex: 1;
  min-height: 0;
  overflow: hidden;
  background: linear-gradient(#efefef 17px, #fff 17px);
}
.layer-tools {
  display: flex;
  align-items: center;
  flex: none;
  gap: 14px;
  height: 35px;
  padding: 0 4px 6px;
  background: #efefef;
  border-bottom: 1px solid #c3c5cb;
  color: #222;
}
.cad td { height: 26px; padding: 0 0 0 3px; line-height: 25px; }
.cad td:first-child, .cad td:nth-child(2) { padding: 0; }
.cad td svg { margin: 0 auto; }
.cad td input[type="checkbox"] { margin-top: 6px; }
```
